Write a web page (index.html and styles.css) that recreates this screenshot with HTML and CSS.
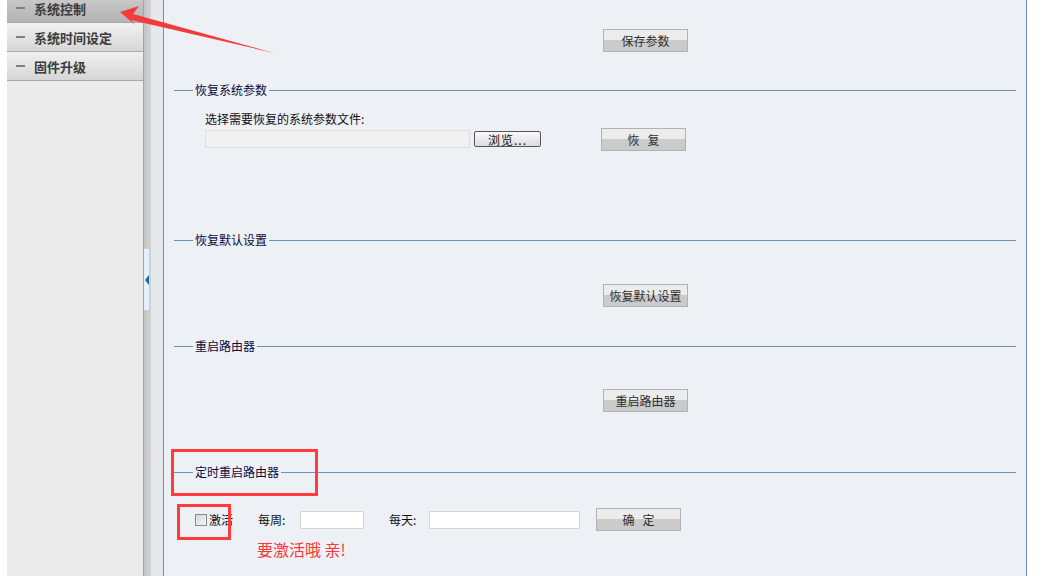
FILE: index.html
```html
<!DOCTYPE html>
<html lang="zh-CN">
<head>
    <meta charset="UTF-8">
    <title>系统控制</title>
    <link rel="stylesheet" href="styles.css">
</head>
<body>

<div class="page">
    <div class="sidebar">
        <ul class="menu">
            <li class="active"><span class="dash"></span>系统控制</li>
            <li><span class="dash"></span>系统时间设定</li>
            <li><span class="dash"></span>固件升级</li>
        </ul>
    </div>

    <div class="splitter">
        <div class="bar">
            <div class="handle"><span class="tri"></span></div>
        </div>
    </div>

    <div class="main">
        <div class="top">
            <button class="btn">保存参数</button>
        </div>

        <fieldset class="sec sec-restore">
            <legend>恢复系统参数</legend>
            <div class="body">
                <p class="hint">选择需要恢复的系统参数文件:</p>
                <div class="row">
                    <input type="text" class="file-path">
                    <button class="browse">浏览...</button>
                    <button class="btn btn-restore">恢&nbsp;&nbsp;&nbsp;复</button>
                </div>
            </div>
        </fieldset>

        <fieldset class="sec sec-default">
            <legend>恢复默认设置</legend>
            <div class="body">
                <button class="btn btn-single">恢复默认设置</button>
            </div>
        </fieldset>

        <fieldset class="sec sec-reboot">
            <legend>重启路由器</legend>
            <div class="body">
                <button class="btn btn-single">重启路由器</button>
            </div>
        </fieldset>

        <fieldset class="sec sec-timer">
            <legend>定时重启路由器</legend>
            <div class="body body-timer">
                <div class="row">
                    <input type="checkbox" class="chk">
                    <span class="chk-label">激活</span>
                    <span class="lbl lbl-week">每周:</span>
                    <input type="text" class="field field-week">
                    <span class="lbl lbl-day">每天:</span>
                    <input type="text" class="field field-day">
                    <button class="btn btn-ok">确&nbsp;&nbsp;&nbsp;定</button>
                </div>
                <p class="tip">要激活哦 亲!</p>
            </div>
        </fieldset>
    </div>
</div>

<!-- annotations drawn over the screenshot -->
<svg class="arrow" width="300" height="70" viewBox="0 0 300 70">
    <polygon points="120,12 139,6 133,14 274,53 131,20 135,25" fill="#f23b3b"/>
</svg>
<div class="mark mark-title"></div>
<div class="mark mark-check"></div>

</body>
</html>
```

FILE: styles.css
```css
body {
    margin: 0;
    padding: 0;
    font-family: "Noto Sans CJK SC", "DejaVu Sans", sans-serif;
    font-size: 12px;
    background: #fff;
    overflow: hidden;
}

.page {
    display: flex;
    height: 576px;
}

/* left menu */
.sidebar {
    width: 136px;
    padding-left: 7px;
    background: #fff;
}

.menu {
    list-style: none;
    margin: -6px 0 0 0;
    padding: 0;
    height: 582px;
    background: #ebebeb;
}

.menu li {
    display: flex;
    align-items: center;
    height: 28px;
    padding-left: 9px;
    border-bottom: 1px solid #a9a9a9;
    background: linear-gradient(#f1f1f1, #d6d6d6);
    color: #3c3c3c;
    font-size: 13px;
    font-weight: bold;
}

.menu li.active {
    background: linear-gradient(#cdcdcd, #b3b3b3);
}

.menu .dash {
    width: 9px;
    height: 2px;
    margin-right: 9px;
    background: #7f7f7f;
}

/* splitter */
.splitter {
    display: flex;
    width: 20px;
    background: #e6e9ec;
}

.bar {
    width: 7px;
    border-left: 1px solid #a3a3a3;
    background: linear-gradient(to right, #c3c3c3, #d4d4d4);
    padding-top: 248px;
}

.handle {
    display: flex;
    align-items: center;
    width: 5px;
    height: 61px;
    border: 1px solid #b8d4e8;
    border-left: none;
    background: #e4f0fa;
}

.tri {
    width: 0;
    height: 0;
    border-top: 5px solid transparent;
    border-bottom: 5px solid transparent;
    border-right: 4px solid #156b9e;
    margin-left: 1px;
}

/* content */
.main {
    width: 862px;
    border-left: 1px solid #6e8fb8;
    border-right: 1px solid #6e8fb8;
    background: #edf0f4;
}

.top {
    padding: 29px 0 0 439px;
}

.btn {
    width: 85px;
    height: 23px;
    padding: 0;
    border: 1px solid #b2b2b2;
    background: linear-gradient(#ececec 50%, #cbcbcb 50%);
    color: #2e2e2e;
    font-family: inherit;
    font-size: 12px;
    line-height: 21px;
}

.sec {
    margin: 0 10px;
    padding: 0 0 0 19px;
    border: none;
    border-top: 1px solid #6e8fb8;
    min-width: 0;
}

.sec legend {
    padding: 0 2px;
    line-height: 16px;
    color: #0b0b3b;
}

.sec .body {
    padding-left: 12px;
}

.sec-restore {
    margin-top: 30px;
}

.hint {
    margin: 13px 0 0 0;
    line-height: 16px;
    color: #111;
}

.row {
    display: flex;
    align-items: center;
    height: 24px;
}

.file-path {
    box-sizing: border-box;
    width: 265px;
    height: 18px;
    margin: 0;
    border: 1px solid #dedede;
    background: #f1f1f1;
}

.browse {
    box-sizing: border-box;
    width: 67px;
    height: 16px;
    margin-left: 4px;
    padding: 0;
    border: 1px solid #555;
    border-radius: 2px;
    background: linear-gradient(#fafafa, #dcdcdc);
    color: #111;
    font-family: inherit;
    font-size: 12px;
    line-height: 13px;
    letter-spacing: 1px;
}

.btn-restore {
    margin-left: 60px;
}

.sec-default {
    margin-top: 81px;
}

.sec-reboot {
    margin-top: 31px;
}

.btn-single {
    display: block;
    margin: 36px 0 0 398px;
}

.sec-reboot .btn-single {
    margin-top: 35px;
}

.sec-timer {
    margin-top: 52px;
}

.sec .body-timer {
    padding-left: 2px;
}

.body-timer .row {
    margin-top: 28px;
    height: 23px;
}

.chk {
    appearance: none;
    box-sizing: border-box;
    width: 12px;
    height: 12px;
    margin: 0 2px 0 0;
    border: 1px solid #8a8a8a;
    background: linear-gradient(135deg, #d8d8d8, #f4f4f4);
}

.chk-label {
    color: #111;
}

.lbl {
    color: #111;
}

.lbl-week {
    width: 42px;
    margin-left: 25px;
}

.lbl-day {
    width: 40px;
    margin-left: 25px;
}

.field {
    box-sizing: border-box;
    height: 18px;
    margin: 0;
    border: 1px solid #d4d4d4;
    background: #fff;
}

.field-week {
    width: 64px;
}

.field-day {
    width: 151px;
}

.btn-ok {
    margin-left: 16px;
}

.tip {
    margin: 9px 0 0 62px;
    font-size: 16px;
    line-height: 18px;
    color: #ff3535;
}

/* red annotations */
.arrow {
    position: absolute;
    left: 0;
    top: 0;
}

.mark {
    position: absolute;
    border: 3px solid #ff3b3b;
}

.mark-title {
    left: 171px;
    top: 449px;
    width: 141px;
    height: 41px;
}

.mark-check {
    left: 177px;
    top: 504px;
    width: 48px;
    height: 30px;
}
```
